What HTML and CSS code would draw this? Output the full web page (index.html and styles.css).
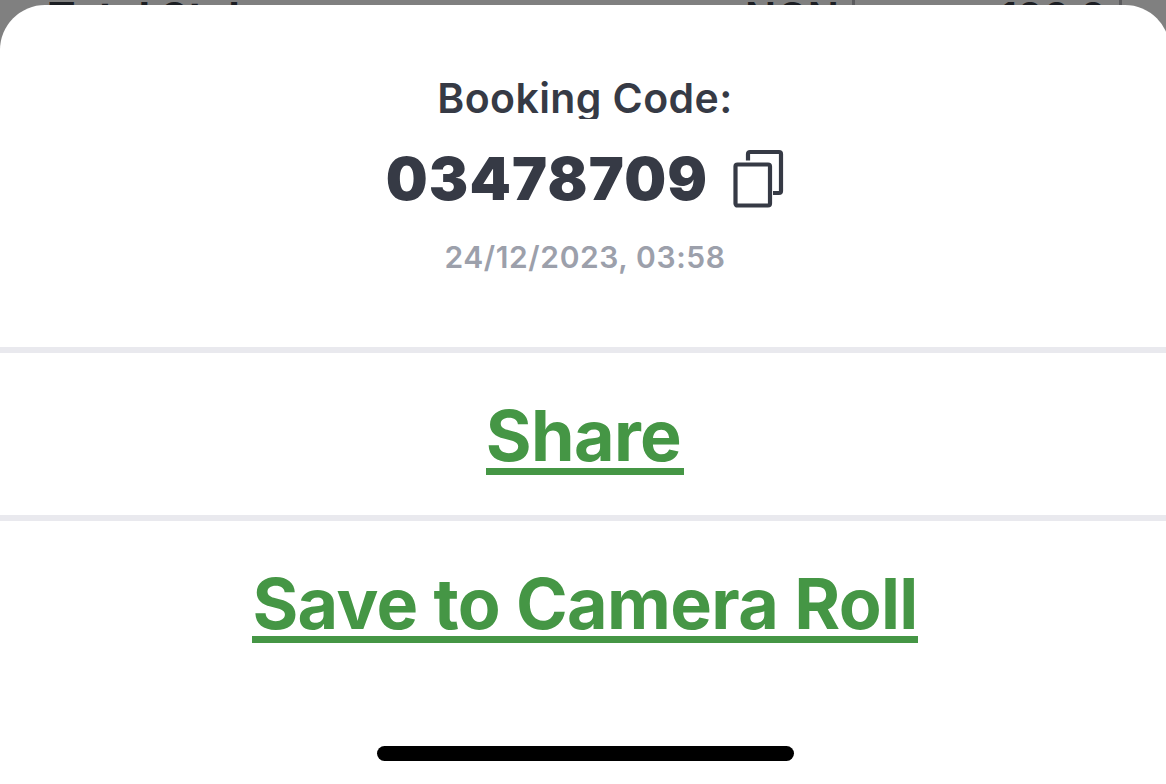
FILE: index.html
```html
<!DOCTYPE html>
<html lang="en">
<head>
    <meta charset="UTF-8">
    <meta name="viewport" content="width=device-width, initial-scale=1.0">
    <title>Booking Code</title>
    <link rel="stylesheet" href="styles.css">
</head>
<body>
    <div class="stake-row">
        <span class="stake-label">Total Stake</span>
        <span class="stake-currency">NGN</span>
        <span class="stake-value">100.0</span>
    </div>
    <main class="sheet">
        <section class="booking">
            <h1 class="booking-title">Booking Code:</h1>
            <div class="booking-code">
                <span class="code">03478709</span>
                <button class="copy" aria-label="Copy">
                    <svg width="52" height="60" viewBox="0 0 52 60" fill="none" stroke="#363a45" stroke-width="4.2" stroke-linejoin="round">
                        <rect x="3.5" y="15.5" width="34.5" height="41" rx="2"/>
                        <path d="M16 11.5V5q0-2 2-2h29q2 0 2 2v37q0 2-2 2h-6" stroke-linecap="butt"/>
                    </svg>
                </button>
            </div>
            <p class="booking-date">24/12/2023, 03:58</p>
        </section>
        <section class="action"><a class="link share" href="#">Share</a></section>
        <section class="action"><a class="link save" href="#">Save to Camera Roll</a></section>
        <div class="home-bar"></div>
    </main>
</body>
</html>
```

FILE: styles.css
```css
* { box-sizing: border-box; }
body { font-family: Inter, "Liberation Sans", sans-serif; background: #808080; margin: 0; width: 1166px; height: 784px; overflow: hidden; }
.stake-row { display: grid; grid-template-columns: 697px 110px 1fr; height: 5px; padding-left: 48px; width: 1122px; overflow: hidden; color: #1c1e23; font-size: 41px; line-height: 34px; font-weight: 600; }
.stake-label { font-weight: 700; letter-spacing: 0.6px; }
.stake-currency { border-right: 3px solid #5b5b5e; letter-spacing: 0.5px; }
.stake-value { border-right: 3px solid #5b5b5e; text-align: right; padding-right: 13px; letter-spacing: -0.6px; }
.sheet { width: 1170px; height: 779px; background: #fff; border-radius: 45px 45px 0 0; }
.booking { display: flex; flex-direction: column; align-items: center; height: 342px; padding-top: 69px; }
.booking-title { margin: 0; height: 45px; overflow: hidden; color: #363a45; font-size: 41px; line-height: 49px; font-weight: 600; letter-spacing: 0.4px; }
.booking-code { display: flex; align-items: center; height: 60px; margin-top: 30px; }
.code { color: #363a45; font-size: 59px; line-height: 60px; font-weight: 900; letter-spacing: 1.2px; }
.copy { display: block; width: 52px; height: 60px; margin-left: 24px; padding: 0; border: none; background: none; }
.copy svg { display: block; }
.booking-date { margin: 29px 0 0; color: #9ca0ab; font-size: 30px; line-height: 38px; font-weight: 600; letter-spacing: 0.6px; }
.action { display: flex; justify-content: center; height: 168px; padding-top: 41px; border-top: 6px solid #e9e9ee; }
.link { height: 81px; border-bottom: 7px solid #459645; color: #459645; font-size: 70px; line-height: 84px; font-weight: 700; letter-spacing: -0.65px; text-decoration: none; white-space: nowrap; }
.share { padding-right: 3px; }
.home-bar { width: 417px; height: 15px; margin: 63px 0 0 377px; border-radius: 8px; background: #000; }
```
